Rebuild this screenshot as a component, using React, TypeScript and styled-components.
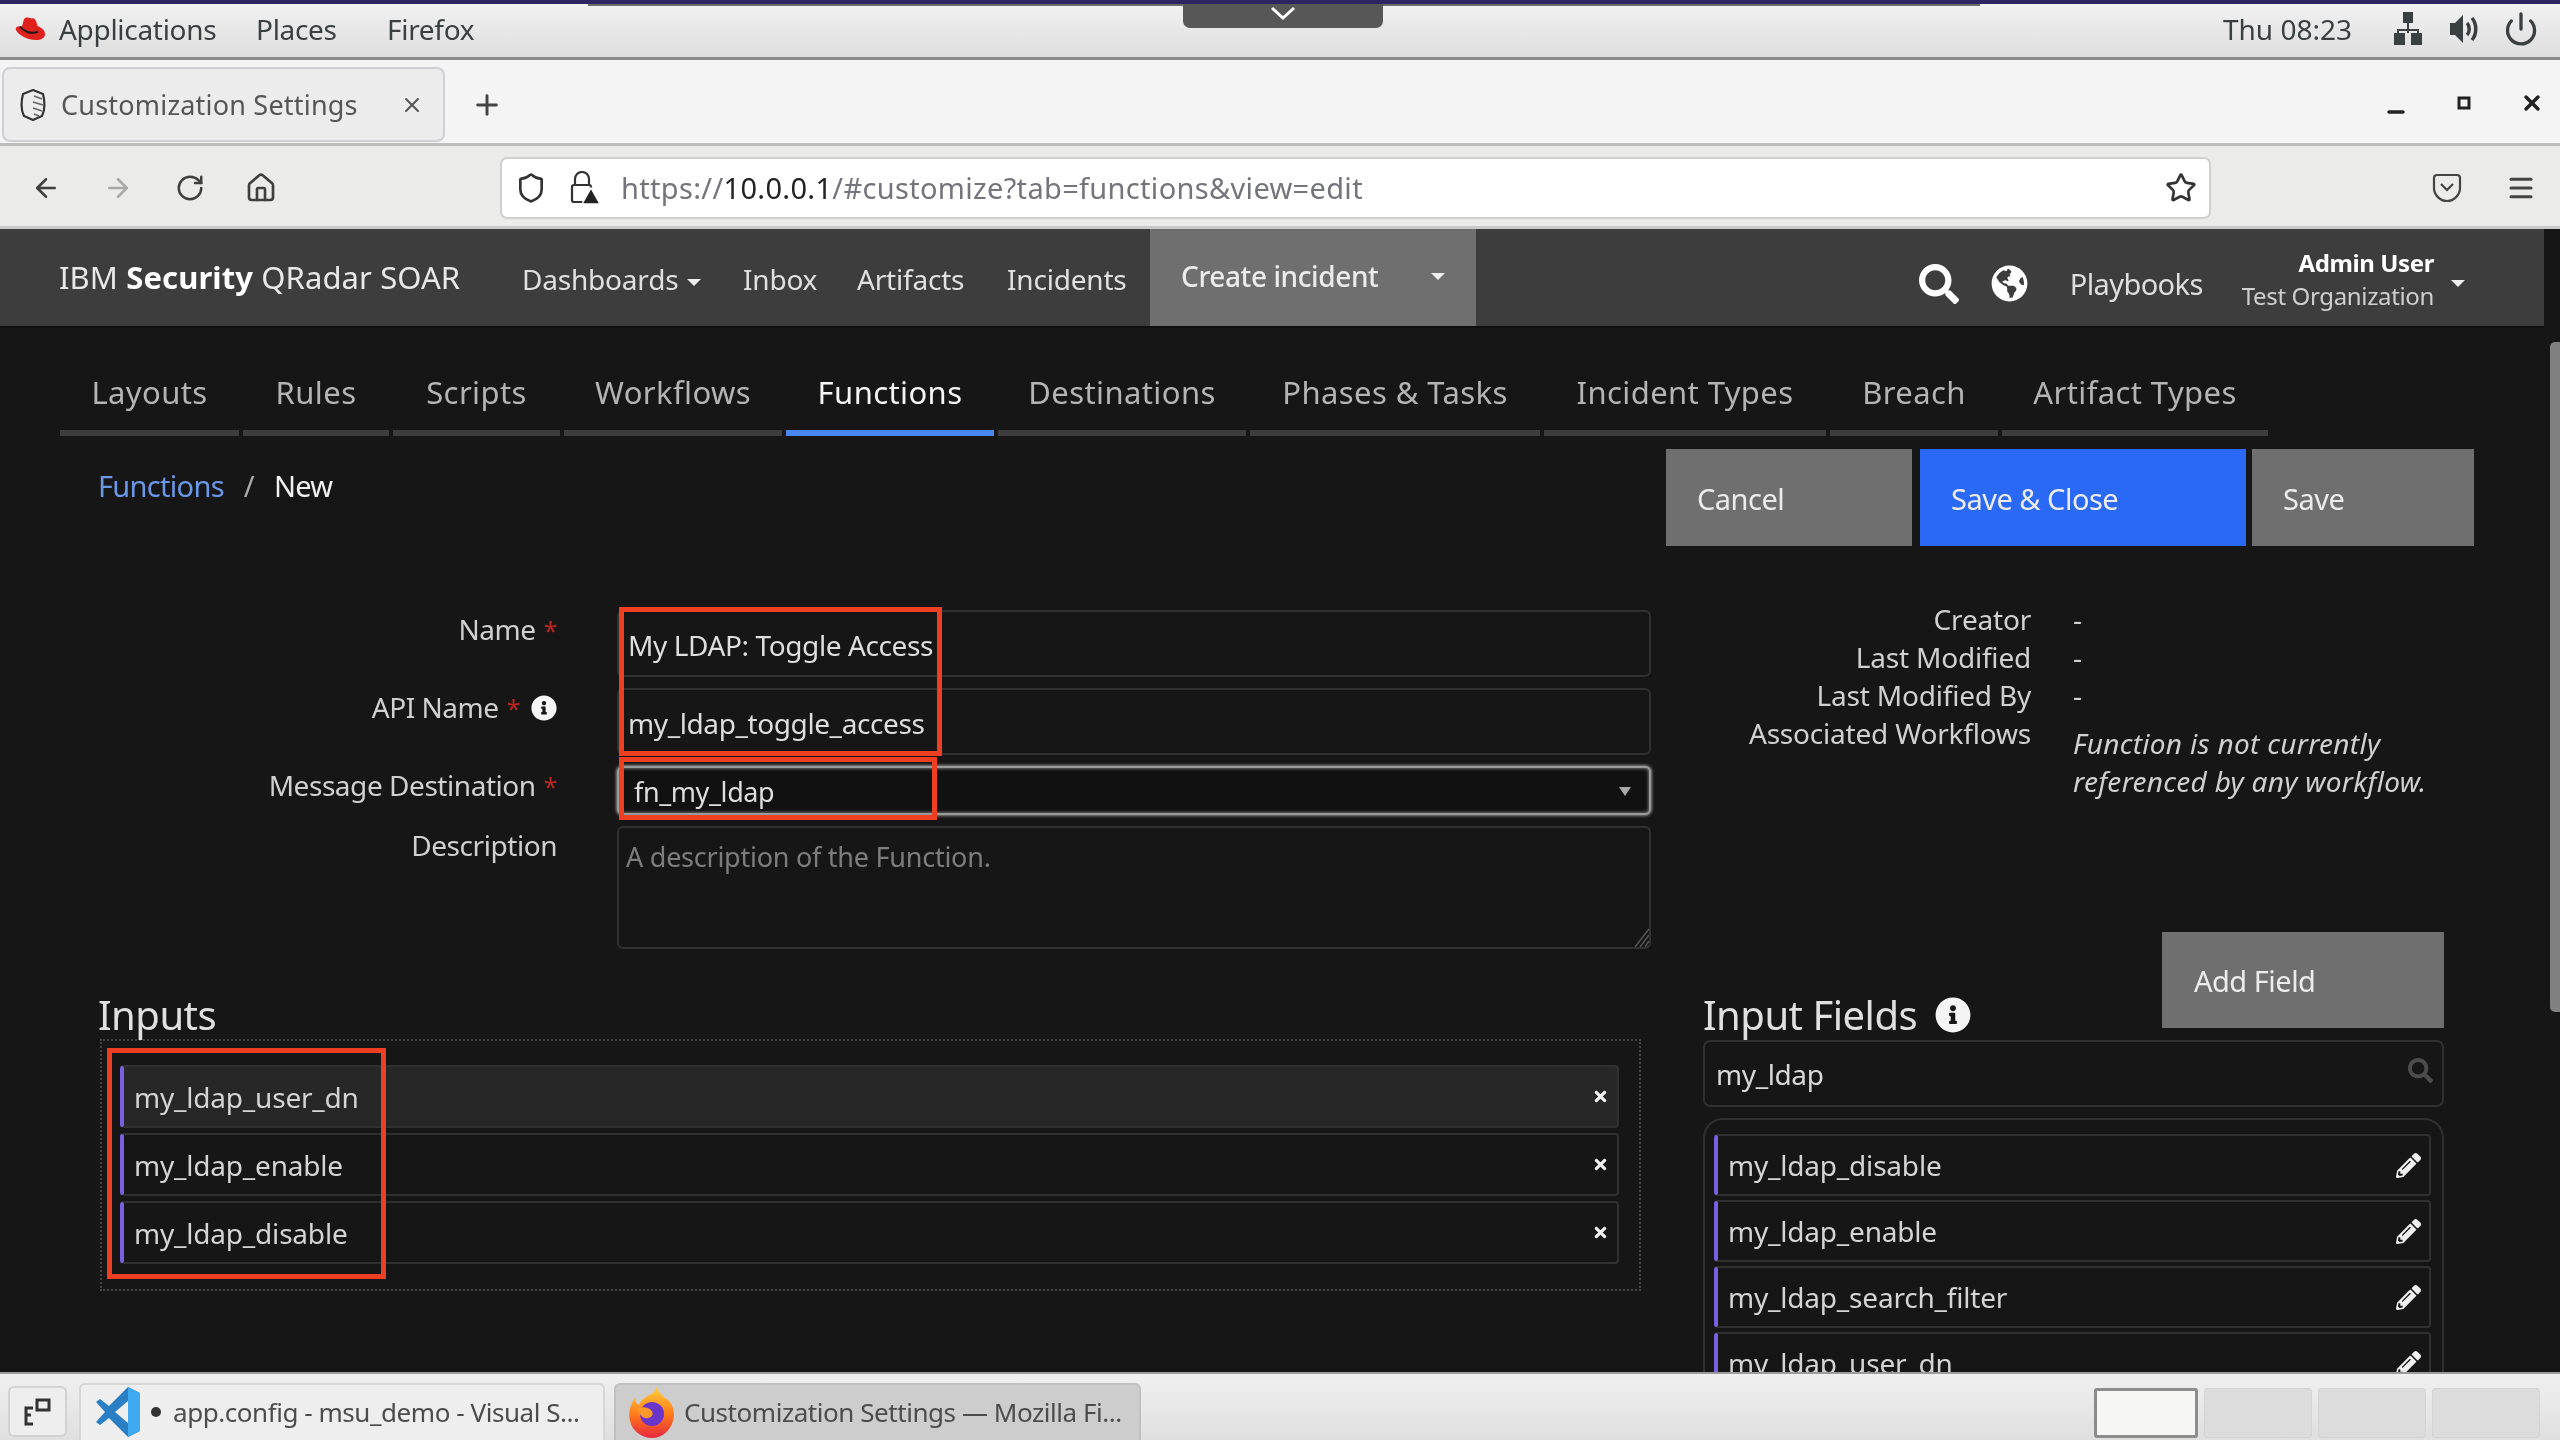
import React from "react";
import styled, { createGlobalStyle } from "styled-components";
import { ArrowLeft, ArrowRight, RotateCw, Home, Shield, Star, Menu, Power, Plus, X, Minus } from "lucide-react";
import { FaSearch, FaGlobeAmericas, FaInfoCircle, FaPencilAlt, FaTimes } from "react-icons/fa";

const Global = createGlobalStyle`
  html, body { margin: 0; padding: 0; background: #161616; overflow: hidden; }
  * { box-sizing: border-box; }
  #root { width: 2560px; height: 1440px; }
`;

const desktopFont = `"Noto Sans", "Open Sans", sans-serif`;
const appFont = `"Noto Sans", "Roboto", sans-serif`;

const Page = styled.div`
  position: relative;
  width: 2560px;
  height: 1440px;
  display: flex;
  flex-direction: column;
  overflow: hidden;
  font-family: ${appFont};
  filter: blur(0.5px);
`;

/* ---------- GNOME top bar ---------- */
const TopBar = styled.header`
  height: 60px;
  flex: none;
  display: flex;
  align-items: center;
  padding: 0 0 4px 14px;
  border-top: 4px solid #2c2560;
  border-bottom: 3px solid #8a8a8a;
  background: linear-gradient(#f1f1f1, #dedede);
  font-family: ${desktopFont};
  font-size: 28px;
  color: #3a3f42;
`;
const TopMenu = styled.span<{ $w: number }>`
  width: ${(p) => p.$w}px;
  flex: none;
  letter-spacing: -0.3px;
`;
const Hat = styled.svg`
  width: 32px;
  height: 26px;
  margin-right: 13px;
  flex: none;
`;
const Clock = styled.span`
  margin-left: auto;
  width: 160px;
  flex: none;
  letter-spacing: 0;
`;
const TrayIcon = styled.span<{ $w: number }>`
  width: ${(p) => p.$w}px;
  flex: none;
  display: flex;
  justify-content: center;
  color: #3a3f42;
`;
const PeekStrip = styled.div`
  position: absolute;
  left: 588px;
  top: 4px;
  width: 1392px;
  height: 2px;
  background: #6b6b6b;
`;
const PeekTab = styled.div`
  position: absolute;
  left: 1183px;
  top: 4px;
  width: 200px;
  height: 24px;
  background: #575757;
  border-radius: 0 0 7px 7px;
  display: flex;
  justify-content: center;
`;
const PeekChevron = styled.svg`
  width: 26px;
  height: 18px;
`;

/* ---------- Firefox chrome ---------- */
const TabStrip = styled.div`
  height: 86px;
  flex: none;
  display: flex;
  align-items: center;
  padding: 6px 0 0 2px;
  background: #f4f4f4;
  border-bottom: 3px solid #bdbdbd;
  font-family: ${desktopFont};
  color: #555;
`;
const BrowserTab = styled.div`
  width: 443px;
  height: 75px;
  flex: none;
  display: flex;
  align-items: center;
  padding: 0 19px 0 16px;
  background: #ececec;
  border: 2px solid #cfcfd6;
  border-radius: 8px;
  font-size: 27px;
`;
const TabTitle = styled.span`
  margin-left: 15px;
  flex: 1;
  letter-spacing: 0.2px;
`;
const NewTab = styled.span`
  margin-left: 26px;
  display: flex;
  color: #444;
`;
const WindowButtons = styled.div`
  margin-left: auto;
  display: flex;
  align-items: center;
  gap: 44px;
  padding-right: 16px;
  color: #222;
`;

const Toolbar = styled.div`
  height: 83px;
  flex: none;
  display: flex;
  align-items: center;
  background: #ebebe9;
  border-bottom: 3px solid #c9c9c9;
  padding: 3px 0 0 31px;
  color: #3f3f3f;
`;
const ToolBtn = styled.span<{ $w: number; $dim?: boolean }>`
  width: ${(p) => p.$w}px;
  flex: none;
  display: flex;
  color: ${(p) => (p.$dim ? "#a8a8a8" : "#3f3f3f")};
`;
const UrlBox = styled.div`
  width: 1711px;
  height: 62px;
  flex: none;
  display: flex;
  align-items: center;
  padding: 0 12px 0 13px;
  background: #fff;
  border: 2px solid #d0d0d0;
  border-radius: 7px;
  font-family: ${desktopFont};
  font-size: 29px;
  color: #74747c;
`;
const LockSlot = styled.svg`
  width: 32px;
  height: 34px;
  margin-left: 22px;
  flex: none;
`;
const UrlText = styled.span`
  margin-left: 20px;
  flex: 1;
  letter-spacing: 0.32px;
`;
const UrlHost = styled.span`
  color: #222;
`;
const ToolEnd = styled.div`
  margin-left: auto;
  display: flex;
  align-items: center;
  gap: 44px;
  padding-right: 24px;
`;

/* ---------- Application ---------- */
const App_ = styled.main`
  flex: 1;
  min-height: 0;
  background: #161616;
  overflow: hidden;
  color: #d0d0d0;
`;
const Nav = styled.nav`
  width: 2544px;
  height: 97px;
  display: flex;
  align-items: stretch;
  background: #3d3d3d;
  box-shadow: 0 2px 0 #0e0e0e;
  color: #e0e0e0;
  font-size: 28px;
`;
const Brand = styled.div`
  width: 522px;
  padding: 28px 0 0 59px;
  font-size: 31px;
  line-height: 40px;
  letter-spacing: 0.1px;
  color: #e8e8e8;
  flex: none;
  white-space: nowrap;
`;
const BrandStrong = styled.b`
  font-weight: 700;
  color: #fff;
`;
const NavItem = styled.div<{ $w: number }>`
  width: ${(p) => p.$w}px;
  flex: none;
  padding-top: 31px;
  line-height: 38px;
  letter-spacing: -0.2px;
  white-space: nowrap;
`;
const Caret = styled.i<{ $ml?: number }>`
  display: inline-block;
  margin-left: ${(p) => p.$ml ?? 9}px;
  vertical-align: middle;
  border-left: 7px solid transparent;
  border-right: 7px solid transparent;
  border-top: 7px solid #eee;
`;
const CreateBtn = styled.div`
  width: 326px;
  flex: none;
  display: flex;
  align-items: flex-start;
  padding: 28px 0 0 31px;
  background: #6f6f6f;
  font-weight: 500;
  line-height: 38px;
  letter-spacing: -0.4px;
  color: #ececec;
`;
const CreateCaret = styled(Caret)`
  margin: 16px 0 0 53px;
`;
const NavRight = styled.div`
  margin-left: auto;
  display: flex;
  align-items: center;
  padding: 12px 79px 0 0;
  color: #fff;
`;
const Playbooks = styled.span`
  margin-left: 42px;
  font-size: 29px;
  letter-spacing: -0.6px;
  color: #dedede;
`;
const GlobeSlot = styled.span`
  margin-left: 32px;
  display: flex;
`;
const UserBlock = styled.div`
  margin-left: 39px;
  margin-top: -9px;
  display: flex;
  flex-direction: column;
  align-items: flex-end;
  line-height: 33px;
`;
const UserName = styled.b`
  font-size: 24px;
  letter-spacing: -0.4px;
`;
const UserOrg = styled.span`
  font-size: 24px;
  letter-spacing: -0.35px;
  color: #cfcfcf;
`;

const Content = styled.div`
  padding: 0;
`;
const Tabs = styled.div`
  margin: 34px 0 0 60px;
  display: grid;
  grid-template-columns: 179px 146px 167px 218px 208px 248px 290px 282px 168px 266px;
  column-gap: 4px;
  width: max-content;
`;
const TabItem = styled.div<{ $active?: boolean }>`
  height: 76px;
  padding-top: 12px;
  text-align: center;
  font-size: 31px;
  line-height: 40px;
  letter-spacing: 0.4px;
  white-space: nowrap;
  color: ${(p) => (p.$active ? "#f4f4f4" : "#b4b4b4")};
  border-bottom: 6px solid ${(p) => (p.$active ? "#4a86f0" : "#3d3d3d")};
`;
const HeaderRow = styled.div`
  margin-top: 13px;
  height: 97px;
  display: flex;
  padding: 0 86px 0 98px;
`;
const Crumbs = styled.div`
  padding-top: 18px;
  font-size: 29px;
  line-height: 38px;
  letter-spacing: -0.7px;
  color: #f0f0f0;
`;
const CrumbLink = styled.span`
  color: #6a97e6;
`;
const CrumbSep = styled.span`
  margin: 0 20px 0 20px;
  color: #aaa;
`;
const HeaderActions = styled.div`
  margin-left: auto;
  display: flex;
`;
const ActionButton = styled.div<{ $w: number; $primary?: boolean; $ml?: number }>`
  width: ${(p) => p.$w}px;
  height: 97px;
  margin-left: ${(p) => p.$ml ?? 0}px;
  padding: 31px 0 0 31px;
  font-size: 29px;
  line-height: 38px;
  letter-spacing: -0.5px;
  color: #ececec;
  background: ${(p) => (p.$primary ? "#2a69f5" : "#6f6f6f")};
`;

const Columns = styled.div`
  display: flex;
  padding-left: 100px;
`;
const LeftCol = styled.section`
  width: 1551px;
  flex: none;
  padding-top: 64px;
`;
const RightCol = styled.section`
  width: 741px;
  margin-left: 52px;
  flex: none;
`;

const Form = styled.div`
  display: grid;
  grid-template-columns: 457px 1fr;
  column-gap: 60px;
  row-gap: 11px;
`;
const Label = styled.div`
  text-align: right;
  font-size: 28px;
  line-height: 38px;
  letter-spacing: -0.45px;
  white-space: nowrap;
  color: #d0d0d0;
`;
const Req = styled.span`
  margin-left: 8px;
  font-size: 25px;
  color: #b8261f;
`;
const InfoSlot = styled.span`
  margin-left: 11px;
  vertical-align: -3px;
  display: inline-flex;
  color: #f4f4f4;
`;
const TextInput = styled.div`
  height: 67px;
  padding-top: 14px;
  padding-left: 9px;
  font-size: 28px;
  line-height: 38px;
  letter-spacing: -0.4px;
  color: #dedede;
  border: 2px solid #303030;
  border-radius: 6px;
`;
const SelectBox = styled.div`
  height: 49px;
  display: flex;
  align-items: center;
  justify-content: space-between;
  padding: 2px 18px 0 15px;
  font-size: 27px;
  letter-spacing: -0.4px;
  color: #dedede;
  background: #111;
  border: 2px solid #9a9a9a;
  border-radius: 6px;
  box-shadow: 0 0 3px 1px #8d8d8d, inset 0 0 3px 1px #6a6a6a;
`;
const SelectCaret = styled.i`
  border-left: 6px solid transparent;
  border-right: 6px solid transparent;
  border-top: 9px solid #a8a8a8;
`;
const TextArea = styled.div`
  position: relative;
  height: 123px;
  padding: 11px 7px;
  font-size: 27px;
  line-height: 36px;
  letter-spacing: -0.25px;
  color: #7d7d7d;
  border: 2px solid #303030;
  border-radius: 6px;
`;
const Resizer = styled.svg`
  position: absolute;
  right: 0;
  bottom: 0;
  width: 14px;
  height: 20px;
`;
const SectionTitle = styled.h2<{ $mt?: number }>`
  margin: ${(p) => p.$mt ?? 0}px 0 0;
  font-size: 40px;
  font-weight: 400;
  line-height: 48px;
  letter-spacing: -0.5px;
  color: #e0e0e0;
`;
const InputsTitle = styled(SectionTitle)`
  margin-left: -2px;
`;
const DropZone = styled.div`
  height: 252px;
  padding: 24px 20px 0 18px;
  display: flex;
  flex-direction: column;
  gap: 5px;
  width: 1541px;
  border: 2px dotted #454545;
`;
const FieldRow = styled.div<{ $hl?: boolean; $h?: number }>`
  height: ${(p) => p.$h ?? 63}px;
  flex: none;
  display: flex;
  align-items: center;
  justify-content: space-between;
  padding: 0 8px 0 10px;
  font-size: 28px;
  letter-spacing: -0.2px;
  color: #d4d4d4;
  background: ${(p) => (p.$hl ? "#272727" : "transparent")};
  border: 2px solid #303030;
  border-left: 4px solid #7a5fe0;
  border-radius: 4px;
`;
const RowIcon = styled.span`
  display: flex;
  color: #f0f0f0;
`;

const Meta = styled.div`
  margin-top: 54px;
  height: 332px;
  display: grid;
  grid-template-columns: 328px 1fr;
  column-gap: 42px;
  grid-auto-rows: min-content;
  font-size: 28px;
  line-height: 38px;
  letter-spacing: -0.2px;
  color: #d0d0d0;
`;
const MetaKey = styled.div`
  text-align: right;
  white-space: nowrap;
`;
const MetaNote = styled.div`
  padding-top: 10px;
  font-style: italic;
  font-size: 28px;
  letter-spacing: 0.3px;
  white-space: nowrap;
`;
const FieldsHeader = styled.div`
  height: 108px;
  display: flex;
  justify-content: space-between;
`;
const FieldsTitle = styled(SectionTitle)`
  align-self: flex-end;
  padding-bottom: 1px;
  display: flex;
  align-items: center;
  gap: 18px;
`;
const AddField = styled.div`
  width: 282px;
  height: 96px;
  padding: 30px 0 0 32px;
  font-size: 29px;
  line-height: 38px;
  letter-spacing: -0.5px;
  color: #ececec;
  background: #6f6f6f;
`;
const SearchBox = styled.div`
  height: 67px;
  display: flex;
  align-items: center;
  justify-content: space-between;
  padding: 0 9px 0 11px;
  font-size: 28px;
  letter-spacing: -0.4px;
  color: #d8d8d8;
  border: 2px solid #303030;
  border-radius: 7px;
`;
const SearchGlyph = styled.span`
  display: flex;
  margin-bottom: 6px;
  color: #4c4c4c;
`;
const ListBox = styled.div`
  margin-top: 11px;
  height: 400px;
  padding: 14px 11px 0 9px;
  display: flex;
  flex-direction: column;
  gap: 4px;
  border: 2px solid #303030;
  border-radius: 20px;
`;

const ScrollThumb = styled.div`
  position: absolute;
  right: 0;
  top: 342px;
  width: 10px;
  height: 670px;
  background: #808080;
  border-radius: 5px 0 0 5px;
`;
const Annotation = styled.div<{ $x: number; $y: number; $w: number; $h: number }>`
  position: absolute;
  left: ${(p) => p.$x}px;
  top: ${(p) => p.$y}px;
  width: ${(p) => p.$w}px;
  height: ${(p) => p.$h}px;
  border: 5px solid #ee3f23;
  pointer-events: none;
`;

/* ---------- Taskbar ---------- */
const Taskbar = styled.footer`
  height: 68px;
  flex: none;
  display: flex;
  padding: 9px 20px 0 8px;
  background: linear-gradient(#f0f0f0, #dfdfdf);
  border-top: 2px solid #9b9b9b;
  font-family: ${desktopFont};
  font-size: 26px;
  color: #4c4c4c;
`;
const ShowDesktop = styled.div`
  width: 59px;
  height: 51px;
  margin-top: 3px;
  display: flex;
  align-items: center;
  justify-content: center;
  background: #eeeeee;
  border: 2px solid #d2d2d2;
  border-radius: 6px;
`;
const TaskButton = styled.div<{ $w: number; $active?: boolean }>`
  width: ${(p) => p.$w}px;
  height: 60px;
  flex: none;
  margin-left: ${(p) => (p.$active ? 9 : 12)}px;
  display: flex;
  align-items: center;
  padding: 0 0 4px ${(p) => (p.$active ? 12 : 14)}px;
  letter-spacing: -0.45px;
  white-space: nowrap;
  overflow: hidden;
  background: ${(p) => (p.$active ? "#cdcdcd" : "#eeeeee")};
  border: 2px solid ${(p) => (p.$active ? "#c0c0c0" : "#d6d6d6")};
  border-bottom: none;
  border-radius: 6px 6px 0 0;
`;
const TaskLogo = styled.svg<{ $mr: number }>`
  width: 48px;
  height: 54px;
  flex: none;
  margin-right: ${(p) => p.$mr}px;
`;
const Dot = styled.i`
  width: 10px;
  height: 10px;
  margin-right: 12px;
  flex: none;
  border-radius: 50%;
  background: #333;
`;
const Workspaces = styled.div`
  margin-left: auto;
  margin-top: 5px;
  display: flex;
  gap: 6px;
`;
const Workspace = styled.div<{ $on?: boolean }>`
  width: ${(p) => (p.$on ? 104 : 108)}px;
  height: 50px;
  background: ${(p) => (p.$on ? "#f6f6f4" : "#dcdcdc")};
  border: ${(p) => (p.$on ? "3px solid #8c8c8c" : "1px solid #d4d4d4")};
  border-radius: 3px;
`;

const inputs = ["my_ldap_user_dn", "my_ldap_enable", "my_ldap_disable"];
const fields = ["my_ldap_disable", "my_ldap_enable", "my_ldap_search_filter", "my_ldap_user_dn"];
const tabs = ["Layouts", "Rules", "Scripts", "Workflows", "Functions", "Destinations", "Phases & Tasks", "Incident Types", "Breach", "Artifact Types"];

export default function App() {
  return (
    <Page>
      <Global />
      <TopBar>
        <Hat viewBox="0 0 32 26">
          <path d="M10 3C13 0 16 2 18 2.500C20 1.500 22 3 23.500 10C27 11.500 31 14 31 18C31 22 27 24 22 24C14 24 4 19 2 14C1 11 4 9.500 8 10.500Z" fill="#e0201c" />
          <path d="M6 10.500C9 15 17 19 24 15.500" fill="none" stroke="#1a1a1a" strokeWidth="2" />
        </Hat>
        <TopMenu $w={197}>Applications</TopMenu>
        <TopMenu $w={131}>Places</TopMenu>
        <TopMenu $w={120}>Firefox</TopMenu>
        <Clock>Thu 08:23</Clock>
        <TrayIcon $w={50}>
          <svg width="30" height="34" viewBox="0 0 30 34" fill="currentColor">
            <rect x="10" y="0" width="10" height="11" />
            <path d="M14 11h2v6h10v4h-2v-2H16v2h-2v-2H6v2H4v-4h10z" />
            <rect x="1" y="21" width="11" height="12" />
            <rect x="18" y="21" width="11" height="12" />
          </svg>
        </TrayIcon>
        <TrayIcon $w={62}>
          <svg width="32" height="32" viewBox="0 0 32 32" fill="none" stroke="currentColor">
            <path d="M2 10h5l8-8v28l-8-8H2z" fill="currentColor" stroke="none" />
            <path d="M19 10c3 3 3 9 0 12M24 5c5 6 5 16 0 22" strokeWidth="3.500" />
          </svg>
        </TrayIcon>
        <TrayIcon $w={52}>
          <Power size={36} strokeWidth={2.2} />
        </TrayIcon>
        <TrayIcon $w={13} />
      </TopBar>
      <PeekStrip />
      <PeekTab>
        <PeekChevron viewBox="0 0 26 18">
          <path d="M2 4l11 10L24 4" fill="none" stroke="#fff" strokeWidth="3" />
        </PeekChevron>
      </PeekTab>

      <TabStrip>
        <BrowserTab>
          <svg width="26" height="32" viewBox="0 0 26 32" fill="none" stroke="#333" strokeWidth="2.200">
            <path d="M13 1l10 4c2 8 2 16-1 22l-9 4-9-4C1 21 1 13 3 5z" />
            <path d="M14 7l8 3M13 13l10 3M13 19l9 3M14 25l5 2" strokeWidth="1.600" stroke="#666" />
          </svg>
          <TabTitle>Customization Settings</TabTitle>
          <X size={24} strokeWidth={2} />
        </BrowserTab>
        <NewTab>
          <Plus size={32} strokeWidth={2.200} />
        </NewTab>
        <WindowButtons>
          <Minus size={24} strokeWidth={3.500} style={{ marginTop: 15 }} />
          <svg width="24" height="24" viewBox="0 0 24 24" style={{ marginTop: -4 }}>
            <rect x="7" y="7" width="10" height="10" fill="none" stroke="#222" strokeWidth="3" />
          </svg>
          <X size={24} strokeWidth={3.500} style={{ marginTop: -4 }} />
        </WindowButtons>
      </TabStrip>

      <Toolbar>
        <ToolBtn $w={72}><ArrowLeft size={30} strokeWidth={2} /></ToolBtn>
        <ToolBtn $w={72} $dim><ArrowRight size={30} strokeWidth={2} /></ToolBtn>
        <ToolBtn $w={70}><RotateCw size={30} strokeWidth={2} /></ToolBtn>
        <ToolBtn $w={255}><Home size={32} strokeWidth={2} /></ToolBtn>
        <UrlBox>
          <Shield size={32} strokeWidth={2} color="#333" />
          <LockSlot viewBox="0 0 32 34">
            <path d="M6 14V8a7 7 0 0 1 14 0v6" fill="none" stroke="#333" strokeWidth="2.200" />
            <rect x="3" y="14" width="19" height="17" rx="2" fill="none" stroke="#333" strokeWidth="2.200" />
            <path d="M22 17l9 16H13z" fill="#222" stroke="#fff" strokeWidth="1.500" />
          </LockSlot>
          <UrlText>
            https://<UrlHost>10.0.0.1</UrlHost>/#customize?tab=functions&amp;view=edit
          </UrlText>
          <Star size={32} strokeWidth={2} color="#333" />
        </UrlBox>
        <ToolEnd>
          <svg width="30" height="32" viewBox="0 0 30 32" fill="none" stroke="#444" strokeWidth="2.200">
            <path d="M2 6a3 3 0 0 1 3-3h20a3 3 0 0 1 3 3v10c0 7-6 13-13 13S2 23 2 16z" />
            <path d="M9 12l6 6 6-6" />
          </svg>
          <Menu size={30} strokeWidth={2.400} color="#444" />
        </ToolEnd>
      </Toolbar>

      <App_>
        <Nav>
          <Brand>
            IBM <BrandStrong>Security</BrandStrong> QRadar SOAR
          </Brand>
          <NavItem $w={221}>Dashboards<Caret /></NavItem>
          <NavItem $w={114}>Inbox</NavItem>
          <NavItem $w={150}>Artifacts</NavItem>
          <NavItem $w={143}>Incidents</NavItem>
          <CreateBtn>
            Create incident
            <CreateCaret />
          </CreateBtn>
          <NavRight>
            <FaSearch size={40} />
            <GlobeSlot><FaGlobeAmericas size={37} /></GlobeSlot>
            <Playbooks>Playbooks</Playbooks>
            <UserBlock>
              <UserName>Admin User</UserName>
              <UserOrg>Test Organization</UserOrg>
            </UserBlock>
            <Caret $ml={17} />
          </NavRight>
        </Nav>
        <Content>
          <Tabs>
            {tabs.map((t) => (
              <TabItem key={t} $active={t === "Functions"}>{t}</TabItem>
            ))}
          </Tabs>
          <HeaderRow>
            <Crumbs>
              <CrumbLink>Functions</CrumbLink>
              <CrumbSep>/</CrumbSep>
              New
            </Crumbs>
            <HeaderActions>
              <ActionButton $w={246}>Cancel</ActionButton>
              <ActionButton $w={326} $ml={8} $primary>Save &amp; Close</ActionButton>
              <ActionButton $w={222} $ml={6}>Save</ActionButton>
            </HeaderActions>
          </HeaderRow>
          <Columns>
            <LeftCol>
              <Form>
                <Label>Name<Req>*</Req></Label>
                <TextInput>My LDAP: Toggle Access</TextInput>
                <Label>
                  API Name<Req>*</Req>
                  <InfoSlot><FaInfoCircle size={26} /></InfoSlot>
                </Label>
                <TextInput>my_ldap_toggle_access</TextInput>
                <Label>Message Destination<Req>*</Req></Label>
                <SelectBox>fn_my_ldap<SelectCaret /></SelectBox>
                <Label>Description</Label>
                <TextArea>
                  A description of the Function.
                  <Resizer viewBox="0 0 14 20">
                    <path d="M14 2L0 20M14 8L5 20M14 14L10 20" stroke="#555" strokeWidth="1.500" />
                  </Resizer>
                </TextArea>
              </Form>
              <InputsTitle $mt={42}>Inputs</InputsTitle>
              <DropZone>
                {inputs.map((n, i) => (
                  <FieldRow key={n} $hl={i === 0}>
                    {n}
                    <RowIcon><FaTimes size={17} /></RowIcon>
                  </FieldRow>
                ))}
              </DropZone>
            </LeftCol>
            <RightCol>
              <Meta>
                <MetaKey>Creator</MetaKey><div>-</div>
                <MetaKey>Last Modified</MetaKey><div>-</div>
                <MetaKey>Last Modified By</MetaKey><div>-</div>
                <MetaKey>Associated Workflows</MetaKey>
                <MetaNote>Function is not currently<br />referenced by any workflow.</MetaNote>
              </Meta>
              <FieldsHeader>
                <FieldsTitle>Input Fields <FaInfoCircle size={36} color="#f4f4f4" /></FieldsTitle>
                <AddField>Add Field</AddField>
              </FieldsHeader>
              <SearchBox>
                my_ldap
                <SearchGlyph><FaSearch size={25} /></SearchGlyph>
              </SearchBox>
              <ListBox>
                {fields.map((n) => (
                  <FieldRow key={n} $h={62}>
                    {n}
                    <RowIcon><FaPencilAlt size={25} /></RowIcon>
                  </FieldRow>
                ))}
              </ListBox>
            </RightCol>
          </Columns>
        </Content>
      </App_>

      <ScrollThumb />
      <Annotation $x={619} $y={607} $w={323} $h={149} />
      <Annotation $x={619} $y={757} $w={318} $h={63} />
      <Annotation $x={107} $y={1048} $w={279} $h={231} />

      <Taskbar>
        <ShowDesktop>
          <svg width="30" height="30" viewBox="0 0 30 30" fill="none" stroke="#333" strokeWidth="3">
            <rect x="14" y="3" width="12" height="10" />
            <path d="M10 11H3v16h7" />
            <path d="M3 18h5" />
          </svg>
        </ShowDesktop>
        <TaskButton $w={526}>
          <TaskLogo $mr={8} viewBox="0 0 48 54">
            <path d="M33 2L14 21 5 14 1 17l9 10-9 10 4 3 9-7 19 19 12-6V8z" fill="#2a7fc4" />
            <path d="M33 2l12 6v38l-12 6z" fill="#3fa9f0" />
            <path d="M33 16L20 27l13 11z" fill="#eeeeee" />
          </TaskLogo>
          <Dot />
          app.config - msu_demo - Visual S...
        </TaskButton>
        <TaskButton $w={527} $active>
          <TaskLogo $mr={8} viewBox="0 0 48 54">
            <defs>
              <linearGradient id="fx" x1="0" y1="0" x2="0" y2="1">
                <stop offset="0" stopColor="#ffd23a" />
                <stop offset="0.55" stopColor="#ff7a1a" />
                <stop offset="1" stopColor="#e8273f" />
              </linearGradient>
            </defs>
            <path d="M28 1c2 6 6 10 12 14 6 6 7 14 5 21-3 10-11 17-21 17S4 46 2 36C0 28 2 20 7 13c0 4 2 6 4 7 2-6 9-9 14-12 2-2 3-4 3-7z" fill="url(#fx)" />
            <circle cx="24" cy="29" r="12" fill="#6a35c9" />
            <path d="M9 24c5-3 11-2 14 1 3 3 2 7-3 8-4 1-8-2-11-9z" fill="#ff9a2a" />
          </TaskLogo>
          Customization Settings — Mozilla Fi...
        </TaskButton>
        <Workspaces>
          <Workspace $on />
          <Workspace />
          <Workspace />
          <Workspace />
        </Workspaces>
      </Taskbar>
    </Page>
  );
}
